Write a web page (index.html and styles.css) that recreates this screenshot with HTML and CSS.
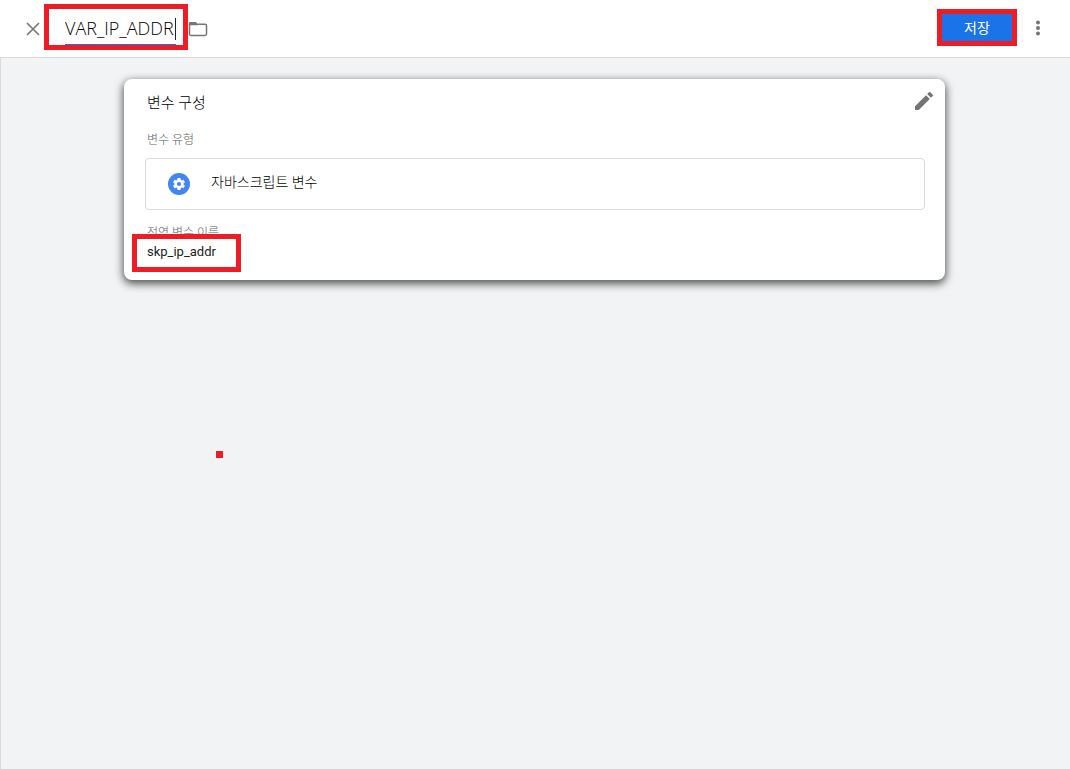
FILE: index.html
```html
<!DOCTYPE html>
<html lang="ko">
<head>
<meta charset="utf-8">
<title>변수 구성</title>
<link rel="stylesheet" href="styles.css">
</head>
<body>
<header class="topbar">
  <button class="icon-button" type="button" aria-label="닫기">
    <svg width="14" height="14" viewBox="0 0 14 14"><path d="M1 1L13 13M13 1L1 13" fill="none" stroke="#757575" stroke-width="1.6"/></svg>
  </button>
  <div class="name-field marked">
    <input class="name-input" type="text" value="VAR_IP_ADDR" aria-label="변수 이름">
    <span class="caret"></span>
  </div>
  <button class="icon-button" type="button" aria-label="폴더">
    <svg width="20" height="16" viewBox="0 0 20 16"><path d="M1.5 3.2V13a1.4 1.4 0 0 0 1.4 1.4h14.2a1.4 1.4 0 0 0 1.4-1.4V4.600a1.400 1.400 0 0 0-1.400-1.400H9.500" fill="none" stroke="#757575" stroke-width="1.500"/><path d="M.8 4.200V2.400A1.400 1.400 0 0 1 2.200 1H7.800L10 3.200V4.200Z" fill="#757575"/></svg>
  </button>
  <div class="save-wrap marked">
    <button class="save-button" type="button">저장</button>
  </div>
  <button class="icon-button" type="button" aria-label="더보기">
    <svg width="16" height="18" viewBox="0 0 16 18" fill="#757575"><circle cx="8" cy="2.500" r="2"/><circle cx="8" cy="8" r="2"/><circle cx="8" cy="13.500" r="2"/></svg>
  </button>
</header>
<main class="workspace">
  <section class="card">
    <div class="card-head">
      <h1 class="card-title">변수 구성</h1>
      <button class="icon-button" type="button" aria-label="수정">
        <svg width="24" height="24" viewBox="0 0 24 24" fill="#757575"><path d="M3 17.250V21h3.750L17.810 9.940l-3.750-3.750L3 17.250zM20.710 7.040a1 1 0 0 0 0-1.410l-2.340-2.340a1 1 0 0 0-1.410 0l-1.830 1.830 3.750 3.750 1.830-1.830z"/></svg>
      </button>
    </div>
    <p class="label">변수 유형</p>
    <div class="type-box">
      <svg width="22" height="22" viewBox="0 0 22 22"><circle cx="11" cy="11" r="11" fill="#4285f4"/><g transform="translate(3.800 3.800) scale(.6)"><path fill="#fff" d="M19.430 12.980c.04-.32.070-.64.070-.98s-.03-.66-.07-.98l2.110-1.650c.19-.15.240-.42.120-.64l-2-3.460c-.12-.22-.39-.3-.61-.22l-2.490 1c-.52-.4-1.080-.73-1.690-.98l-.38-2.650A.49.49 0 0 0 14 2h-4c-.25 0-.46.180-.49.420l-.38 2.650c-.61.250-1.170.590-1.690.980l-2.490-1c-.23-.09-.49 0-.61.220l-2 3.460c-.13.220-.07.490.120.640l2.110 1.650c-.04.320-.07.650-.07.980s.03.660.070.980l-2.110 1.650c-.19.150-.24.420-.12.640l2 3.460c.12.220.390.300.610.220l2.490-1c.52.400 1.080.730 1.690.980l.38 2.650c.03.240.240.420.490.420h4c.25 0 .46-.18.490-.42l.38-2.650c.61-.25 1.170-.59 1.690-.98l2.490 1c.23.090.490 0 .61-.22l2-3.460c.12-.22.070-.49-.12-.64l-2.110-1.650zM12 15.500a3.500 3.500 0 1 1 0-7 3.500 3.500 0 0 1 0 7z"/></g></svg>
      <span class="type-name">자바스크립트 변수</span>
    </div>
    <p class="label">전역 변수 이름</p>
    <div class="value marked">skp_ip_addr</div>
  </section>
  <span class="dot"></span>
</main>
</body>
</html>
```
FILE: styles.css
```css
* {
  box-sizing: border-box;
}

body {
  margin: 0;
  min-height: 100vh;
  display: flex;
  flex-direction: column;
  background: #f1f3f4;
  color: #212121;
  font-family: Roboto, "Noto Sans CJK KR", sans-serif;
  font-size: 14px;
}

button {
  font: inherit;
  border: 0;
  padding: 0;
  cursor: pointer;
}

.icon-button {
  display: flex;
  background: none;
}

/* Red annotation frame drawn over an element */
.marked {
  position: relative;
}

.marked::after {
  content: "";
  position: absolute;
  border: 5px solid #ee1c25;
  pointer-events: none;
}

.topbar {
  display: flex;
  align-items: center;
  height: 58px;
  padding: 0 24px 0 26px;
  background: #fff;
  border-bottom: 1px solid #dadada;
}

.name-field {
  width: 111px;
  margin: 0 12px 0 25px;
}

.name-field::after {
  inset: -8px -12px -4px -21px;
}

.name-input {
  display: block;
  width: 100%;
  height: 34px;
  padding: 0;
  border: 0;
  border-bottom: 2px solid #1a73e8;
  outline: 0;
  background: none;
  color: #000;
  font-family: "Open Sans", sans-serif;
  font-size: 18px;
  font-weight: 350;
}

.caret {
  position: absolute;
  top: 6px;
  right: 0;
  width: 1px;
  height: 22px;
  background: #212121;
}

.save-wrap {
  margin: 0 18px 2px auto;
}

.save-wrap::after {
  inset: -5px;
}

.save-button {
  display: block;
  width: 70px;
  height: 27px;
  padding-bottom: 2px;
  background: #1a73e8;
  color: #fff;
}

.workspace {
  position: relative;
  flex: 1;
  padding: 21px 125px 21px 123px;
  border-left: 1px solid #dadada;
}

.card {
  max-width: 821px;
  margin: 0 auto;
  padding: 10px 20px 18px 21px;
  background: #fff;
  border-radius: 8px;
  box-shadow: 0 3px 8px 1px rgba(0, 0, 0, 0.65);
}

.card-head {
  display: flex;
  align-items: center;
  justify-content: space-between;
  margin-right: -11px;
}

.card-title {
  margin: 0;
  padding: 4px 0 0 2px;
  color: #000;
  font-size: 15px;
  font-weight: 300;
  line-height: 20px;
}

.label {
  margin: 18px 0 9px;
  padding-left: 2px;
  color: #616161;
  font-size: 12px;
  font-weight: 300;
  line-height: 18px;
}

.type-box {
  display: flex;
  align-items: center;
  gap: 21px;
  height: 52px;
  padding: 0 22px;
  border: 1px solid #dadce0;
  border-radius: 4px;
}

.type-name {
  padding-bottom: 6px;
  color: #000;
  font-weight: 300;
}

.type-box + .label {
  margin: 14px 0 0;
}

.value {
  width: 80px;
  margin-left: 2px;
  font-size: 13px;
  line-height: 20px;
}

.value::after {
  inset: -8px -14px -10px -15px;
}

.dot {
  position: absolute;
  top: 393px;
  left: 215px;
  width: 7px;
  height: 7px;
  background: #ee1c25;
}
```
